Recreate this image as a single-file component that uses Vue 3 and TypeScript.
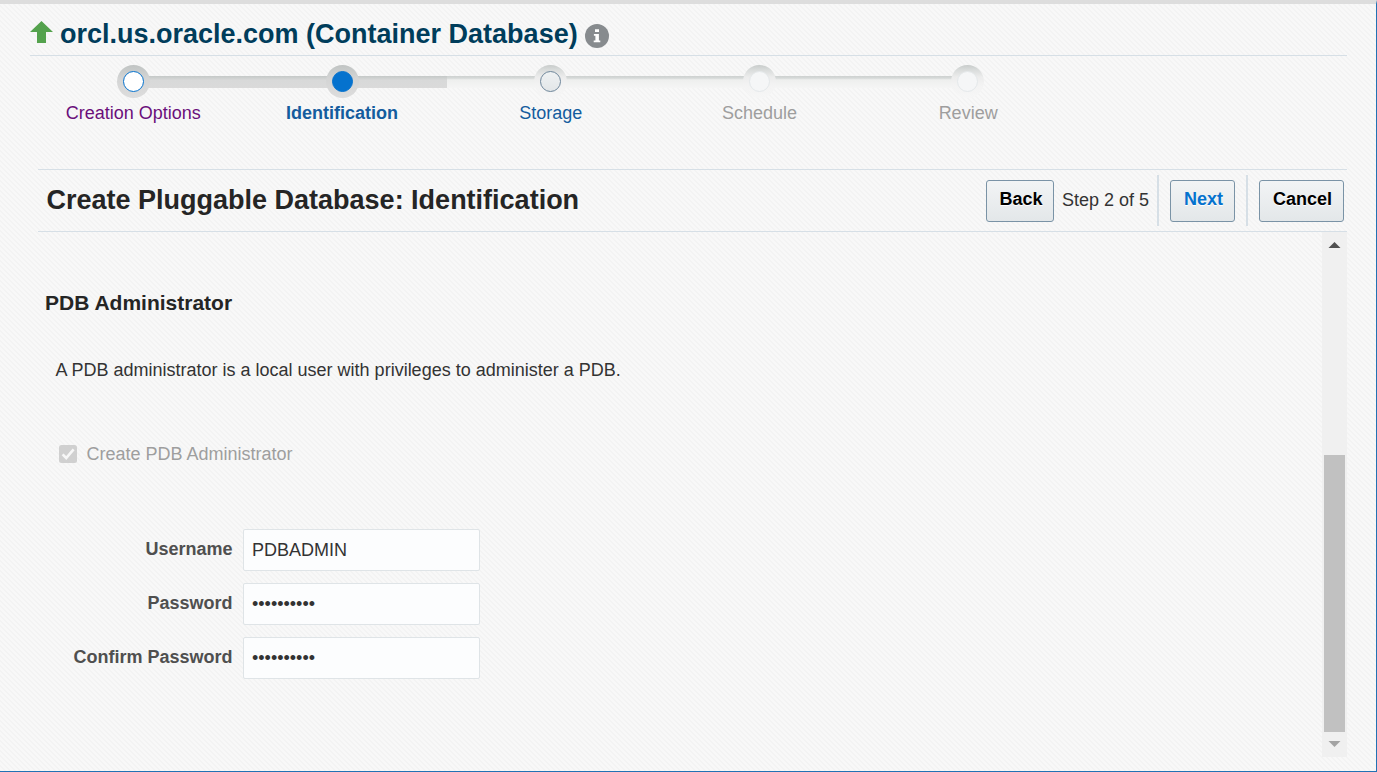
<script setup lang="ts">
import { ref } from 'vue'

type StepState = 'visited' | 'current' | 'next' | 'disabled'
interface Step { label: string; state: StepState; x: number }

const steps: Step[] = [
  { label: 'Creation Options', state: 'visited', x: 104.5 },
  { label: 'Identification', state: 'current', x: 313.5 },
  { label: 'Storage', state: 'next', x: 521.5 },
  { label: 'Schedule', state: 'disabled', x: 730.5 },
  { label: 'Review', state: 'disabled', x: 938.5 },
]
const isActive = (s: StepState) => s === 'visited' || s === 'current'

const fields = ref([
  { id: 'username', label: 'Username', type: 'text', value: 'PDBADMIN' },
  { id: 'password', label: 'Password', type: 'password', value: 'welcome123' },
  { id: 'confirm', label: 'Confirm Password', type: 'password', value: 'welcome123' },
])
</script>

<template>
  <div class="page">
    <header class="target">
      <svg class="up" width="23" height="22" viewBox="0 0 23 22">
        <path d="M11.5 0 L23 11 H16 V22 H7 V11 H0 Z" fill="#54a24d" />
      </svg>
      <h1>orcl.us.oracle.com (Container Database)</h1>
      <svg class="info" width="24" height="24" viewBox="0 0 24 24">
        <circle cx="12" cy="12" r="12" fill="#878b8e" />
        <path d="M10 5.2h4v2.9h-4z M8.9 10h5v6.4h1.4v1.8H8.7v-1.8h1.7v-4.6H8.9z" fill="#fff" />
      </svg>
    </header>

    <nav class="train">
      <svg class="rail" width="1043" height="35" viewBox="0 0 1043 35">
        <defs>
          <linearGradient id="railDark" x1="0" y1="0" x2="0" y2="1">
            <stop offset="0" stop-color="#c4c8c7" />
            <stop offset=".35" stop-color="#d8d9d9" />
            <stop offset="1" stop-color="#dadada" />
          </linearGradient>
          <linearGradient id="railLight" x1="0" y1="0" x2="0" y2="1">
            <stop offset="0" stop-color="#cdd1d0" />
            <stop offset=".18" stop-color="#d6d9d8" />
            <stop offset=".32" stop-color="#eeefee" />
            <stop offset="1" stop-color="#f5f5f5" />
          </linearGradient>
          <linearGradient id="haloDark" x1="0" y1="0" x2="0" y2="1">
            <stop offset="0" stop-color="#c0c4c3" />
            <stop offset=".4" stop-color="#d3d4d4" />
            <stop offset="1" stop-color="#dddddd" />
          </linearGradient>
          <linearGradient id="haloLight" x1="0" y1="0" x2="0" y2="1">
            <stop offset="0" stop-color="#c8cccb" />
            <stop offset=".14" stop-color="#d8dbda" />
            <stop offset=".36" stop-color="#ececec" />
            <stop offset=".6" stop-color="#f3f3f3" />
            <stop offset="1" stop-color="#f6f6f6" />
          </linearGradient>
          <linearGradient id="knob" x1="0" y1="0" x2="0" y2="1">
            <stop offset="0" stop-color="#eff2f3" />
            <stop offset="1" stop-color="#e2e6e8" />
          </linearGradient>
        </defs>
        <rect x="104" y="11" width="314" height="12" fill="url(#railDark)" />
        <rect x="418" y="11" width="520" height="12" fill="url(#railLight)" />
        <g v-for="s in steps" :key="s.label">
          <circle :cx="s.x" cy="16.5" r="16.5" :fill="isActive(s.state) ? 'url(#haloDark)' : 'url(#haloLight)'" />
          <circle :class="['knob', s.state]" :cx="s.x" cy="16.5" r="10" />
        </g>
      </svg>
      <ul class="labels">
        <li v-for="s in steps" :key="s.label" :class="s.state">{{ s.label }}</li>
      </ul>
    </nav>

    <section class="bar">
      <h2>Create Pluggable Database: Identification</h2>
      <button class="btn back">Back</button>
      <span class="count">Step 2 of 5</span>
      <i class="sep"></i>
      <button class="btn next">Next</button>
      <i class="sep"></i>
      <button class="btn cancel">Cancel</button>
    </section>

    <div class="body">
      <main class="content">
        <h3>PDB Administrator</h3>
        <p>A PDB administrator is a local user with privileges to administer a PDB.</p>
        <div class="check">
          <svg width="18" height="18" viewBox="0 0 18 18">
            <rect width="18" height="18" rx="2.5" fill="#d0d0d0" />
            <path d="M3.6 9.4 L7.2 13 L14.6 4.4" fill="none" stroke="#f7f7f7" stroke-width="2.6" />
          </svg>
          <span>Create PDB Administrator</span>
        </div>
        <form class="form" @submit.prevent>
          <div v-for="f in fields" :key="f.id" class="row">
            <label :for="f.id">{{ f.label }}</label>
            <input :id="f.id" v-model="f.value" :type="f.type" autocomplete="off" />
          </div>
        </form>
      </main>
      <aside class="scroll">
        <svg class="arrow" width="25" height="25" viewBox="0 0 25 25"><path d="M6.5 16 L12.5 10 L18.5 16 Z" fill="#505050" /></svg>
        <div class="thumb"></div>
        <svg class="arrow" width="25" height="25" viewBox="0 0 25 25"><path d="M6.5 9 H18.5 L12.5 15 Z" fill="#a3a3a3" /></svg>
      </aside>
    </div>
  </div>
</template>

<style>
body { margin: 0; overflow: hidden; }
</style>

<style scoped>
* { box-sizing: border-box; }
.page {
  width: 1377px;
  height: 772px;
  padding: 0 29px;
  display: flex;
  flex-direction: column;
  border-top: 4px solid #dddddd;
  border-right: 1px solid #2272b4;
  border-bottom: 1px solid #2272b4;
  background: linear-gradient(45deg, #f8f8f8 25%, #f3f3f3 25% 50%, #f8f8f8 50% 75%, #f3f3f3 75%) 0 0 / 5px 5px;
  font-family: "Liberation Sans", Arial, sans-serif;
  font-size: 18px;
  color: #333;
}
h1, h2, h3, p, ul { margin: 0; padding: 0; font-weight: bold; white-space: nowrap; }
.target {
  height: 52px;
  flex: none;
  margin-left: 1px;
  display: flex;
  align-items: flex-start;
  border-bottom: 1px solid #d6dfe6;
}
.up { margin-top: 17px; flex: none; }
h1 { margin: 15px 0 0 7px; font-size: 27px; line-height: 31px; color: #003d5b; }
.info { margin: 20px 0 0 7px; flex: none; }
.train { height: 113px; flex: none; padding-top: 9px; }
.rail { display: block; }
.knob.visited { fill: #fff; stroke: #0572ce; stroke-width: 1; }
.knob.current { fill: #0572ce; stroke: #0572ce; stroke-width: 1; }
.knob.next { fill: url(#knob); stroke: #6f879b; stroke-width: 1; }
.knob.disabled { fill: #f5f6f7; stroke: #e4e8ea; stroke-width: 1; }
.labels {
  width: 1043.5px;
  display: grid;
  grid-template-columns: repeat(5, 1fr);
  list-style: none;
  margin-top: 3px;
}
.labels li { text-align: center; line-height: 21px; font-weight: normal; color: #9e9e9e; }
.labels .visited { color: #6b0f7b; }
.labels .current { color: #145c9e; font-weight: bold; }
.labels .next { color: #145c9e; }
.bar {
  height: 63px;
  flex: none;
  margin-left: 9px;
  padding: 0 3px 0 8.5px;
  display: flex;
  align-items: center;
  border-top: 1px solid #d6dfe6;
  border-bottom: 1px solid #d6dfe6;
}
h2 { flex: 1; font-size: 27px; line-height: 31px; color: #252525; }
.btn {
  height: 42px;
  padding: 0 0 3px 2px;
  font: bold 18px "Liberation Sans", Arial, sans-serif;
  border: 1px solid #7a93a6;
  border-radius: 3px;
  background: linear-gradient(#f2f4f5, #e3e7e9);
  color: #000;
  text-shadow: 0 1px 0 #fff;
}
.back { width: 68px; }
.next.btn { width: 65px; color: #0572ce; }
.cancel { width: 85px; }
.count { width: 87px; margin: 0 8px; white-space: nowrap; }
.sep { width: 2px; height: 51px; background: #d6dfe6; margin-right: 11px; }
.next + .sep { margin-left: 11px; }
.body { flex: 1; display: flex; justify-content: space-between; }
.content { padding: 58px 0 0 16px; color: #333; }
h3 { font-size: 21px; line-height: 26px; color: #252525; }
p { margin: 44px 0 0 10.5px; font-weight: normal; line-height: 21px; }
.check { margin: 62px 0 0 14px; height: 22px; display: flex; align-items: center; gap: 9.5px; color: #9e9e9e; }
.form { margin-top: 64px; display: grid; gap: 12px; }
.row { display: flex; }
label { width: 187.5px; margin-right: 10.5px; text-align: right; font-weight: bold; line-height: 41px; color: #4f4f4f; }
input {
  width: 237px;
  height: 42px;
  padding: 0 8px;
  font: 18px "Liberation Sans", Arial, sans-serif;
  color: #333;
  background: #fcfdfe;
  border: 1px solid #dfe4e7;
  border-radius: 2px;
}
.scroll {
  width: 25px;
  height: 525px;
  display: flex;
  flex-direction: column;
  align-items: center;
  background: #f0f0f0;
}
.arrow { flex: none; display: block; }
.thumb { width: 21px; height: 277px; margin-top: 198px; background: #c1c1c1; }
</style>
